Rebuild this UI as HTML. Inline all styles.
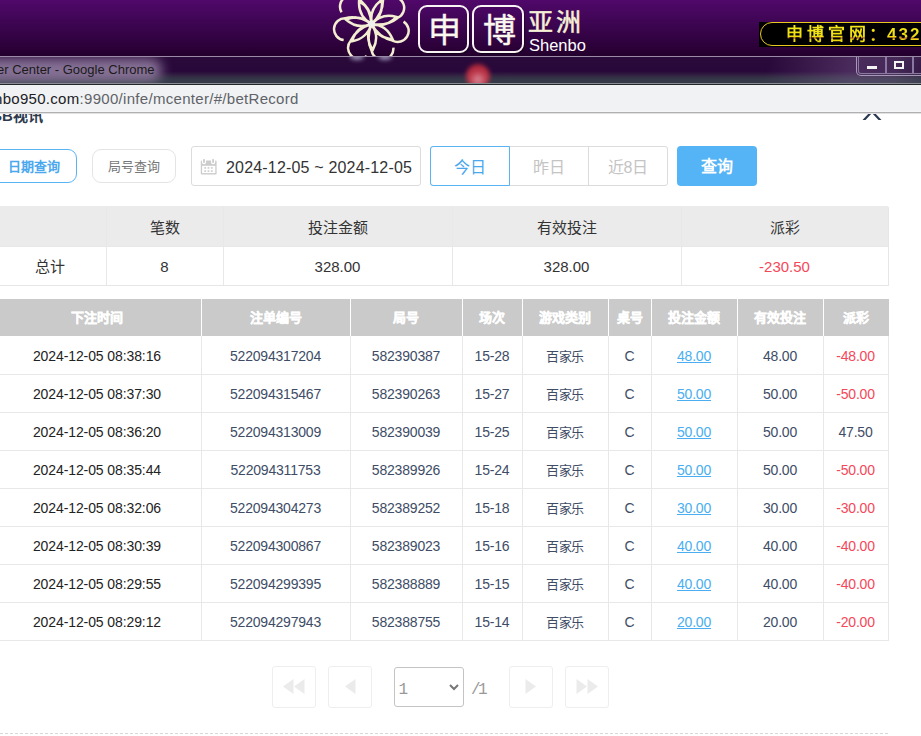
<!DOCTYPE html>
<html lang="zh-CN">
<head>
<meta charset="utf-8">
<style>
html,body{margin:0;padding:0;}
body{width:921px;height:736px;overflow:hidden;position:relative;background:#fff;font-family:"Liberation Sans",sans-serif;}
.a{position:absolute;}
/* banner */
#banner{position:absolute;left:0;top:0;width:921px;height:56px;background:linear-gradient(#50086a 0%,#3c0550 45%,#2a0036 88%,#22002c 100%);overflow:hidden;}
#bline{position:absolute;left:0;top:56px;width:921px;height:1px;background:#9a8aa8;}
#title{position:absolute;left:0;top:57px;width:921px;height:26px;background:linear-gradient(#2a0a3a 0%,#28083a 55%,#342a44 75%,#343848 85%,#363a48 100%);overflow:hidden;}
#addr{position:absolute;left:0;top:85px;width:921px;height:26px;background:#f1f2f4;overflow:hidden;}
/* tables */
.c{position:absolute;text-align:center;white-space:nowrap;overflow:hidden;}
.sumbg{position:absolute;background:#ebebeb;border-radius:3px 3px 0 0;}
.sumbox{position:absolute;border:1px solid #e6e6e6;border-top:none;border-left:none;border-radius:0 3px 0 0;}
.sh{font-size:15px;color:#333;padding-top:2px;box-sizing:border-box;}
.sb{font-size:15px;color:#333;padding-top:1px;box-sizing:border-box;}
.vl{position:absolute;width:1px;background:#e8e8e8;}
.vlw{position:absolute;width:1px;background:#fff;}
.hl{position:absolute;height:1px;background:#e8e8e8;}
.dhbg{position:absolute;background:#cacaca;}
.dh{font-size:13px;color:#fff;font-weight:bold;-webkit-text-stroke:0.35px #fff;}
.db{font-size:14px;color:#3e4c66;letter-spacing:-0.2px;padding-top:1px;box-sizing:border-box;}
.dt{color:#222;letter-spacing:-0.1px;}
.lnk{color:#4aaef0;}
.red{color:#f5475a;}
</style>
</head>
<body>
<div id="banner">
  <svg class="a" style="left:330px;top:0px" width="84" height="56" viewBox="0 0 84 56"><path d="M41.50 24.00 Q30.09 13.86 15.89 19.49 Q27.31 29.62 41.50 24.00 M13.66 40.07 A11 11 0 0 1 15.38 18.16 Q28.50 15.00 41.50 24.00 M41.50 24.00 Q42.31 8.76 29.07 1.17 Q28.26 16.41 41.50 24.00 M11.58 12.25 A11 11 0 0 1 29.78 -0.06 Q40.43 8.22 41.50 24.00 M41.50 24.00 Q53.92 15.13 51.60 0.04 Q39.18 8.91 41.50 24.00 M32.03 -6.72 A11 11 0 0 1 53.01 -0.17 Q53.17 13.33 41.50 24.00 M41.50 24.00 Q56.18 28.18 66.53 16.96 Q51.85 12.78 41.50 24.00 M59.61 -2.56 A11 11 0 0 1 67.57 17.93 Q57.12 26.47 41.50 24.00 M41.50 24.00 Q47.39 38.08 62.61 39.18 Q56.73 25.09 41.50 24.00 M73.56 21.60 A11 11 0 0 1 62.50 40.60 Q49.31 37.75 41.50 24.00 M41.50 24.00 Q34.16 37.38 42.80 49.97 Q50.14 36.59 41.50 24.00 M63.36 47.57 A11 11 0 0 1 41.62 50.77 Q35.62 38.68 41.50 24.00 M41.50 24.00 Q26.46 26.60 22.01 41.20 Q37.05 38.60 41.50 24.00 M36.70 55.79 A11 11 0 0 1 20.65 40.78 Q26.36 28.55 41.50 24.00" fill="none" stroke="#f3eed2" stroke-width="2.5"/><circle cx="41.5" cy="24" r="3.6" fill="#f0f0ee"/></svg>
  <div class="a" style="left:418px;top:5px;width:47px;height:44px;border:2px solid #f8f4f4;border-radius:9px;box-shadow:1px 1px 1px rgba(0,0,0,0.4);"></div>
  <div class="a" style="left:472px;top:5px;width:48px;height:44px;border:2px solid #f8f4f4;border-radius:9px;box-shadow:1px 1px 1px rgba(0,0,0,0.4);"></div>
  <div class="a" style="left:421px;top:6px;width:46px;text-align:center;font-size:33px;line-height:50px;color:#fbf8f0;-webkit-text-stroke:0.4px #fbf8f0;">申</div>
  <div class="a" style="left:475px;top:6px;width:48px;text-align:center;font-size:33px;line-height:50px;color:#fbf8f0;-webkit-text-stroke:0.4px #fbf8f0;">博</div>
  <div class="a" style="left:528px;top:7px;font-size:25px;line-height:30px;color:#f6f0d6;letter-spacing:3px;-webkit-text-stroke:0.5px #f6f0d6;">亚洲</div>
  <div class="a" style="left:529px;top:35px;font-size:16.5px;line-height:20px;color:#fff;">Shenbo</div>
  <div class="a" style="left:759px;top:22px;width:170px;height:25px;background:#000;"></div>
  <div class="a" style="left:760px;top:22px;width:180px;height:22px;border:1.5px solid #e8c820;border-radius:12px;"></div>
  <div class="a" style="left:786px;top:22px;font-size:17px;line-height:25px;font-weight:bold;color:transparent;background:linear-gradient(#f6ea20 0%,#f0de10 58%,#c88a20 61%,#c88a20 66%,#ecd810 69%,#e8d010 100%);-webkit-background-clip:text;background-clip:text;letter-spacing:4px;white-space:nowrap;">申博官<span style="letter-spacing:3px">网</span><span style="letter-spacing:1px">：</span><span style="letter-spacing:2px">432</span></div>
</div>
<div id="bline"></div>
<div id="title">
  <div class="a" style="left:-30px;top:1px;width:192px;height:24px;border-radius:12px;background:rgba(140,120,155,0.95);filter:blur(6px);"></div>
  <div class="a" style="left:-3px;top:-1px;font-size:13px;line-height:27px;color:#1a1a1a;white-space:nowrap;">er Center - Google Chrome</div>
  <div class="a" style="left:350px;top:-3px;width:14px;height:6px;border-radius:50%;background:rgba(200,200,230,0.7);filter:blur(2px);"></div>
  <div class="a" style="left:378px;top:-3px;width:14px;height:6px;border-radius:50%;background:rgba(200,200,230,0.7);filter:blur(2px);"></div>
  <div class="a" style="left:466px;top:7px;width:24px;height:24px;border-radius:50%;background:radial-gradient(circle at 50% 65%,#e898a8 0%,#d04050 40%,#b82838 70%);filter:blur(2px);opacity:0.9"></div>
  <div class="a" style="left:640px;top:0px;width:281px;height:26px;background:linear-gradient(105deg,rgba(0,0,0,0) 45%,rgba(125,95,145,0.4) 75%,rgba(120,100,140,0.35) 90%,rgba(100,90,120,0.2) 100%);"></div>
  <div class="a" style="left:856px;top:-1px;width:70px;height:19px;border:1px solid #a898b8;border-top:none;border-radius:0 0 0 5px;"></div>
  <div class="a" style="left:858px;top:-1px;width:26px;height:17px;border:1px solid #8a78a0;border-top:none;border-radius:0 0 0 3px;"></div>
  <div class="a" style="left:886px;top:-1px;width:25px;height:17px;border:1px solid #8a78a0;border-top:none;"></div>
  <div class="a" style="left:913px;top:-1px;width:25px;height:17px;border:1px solid #8a78a0;border-top:none;"></div>
  <div class="a" style="left:867px;top:9px;width:10px;height:3px;background:#f4f4f4;"></div>
  <div class="a" style="left:894px;top:4px;width:6px;height:4px;border:2px solid #f4f4f4;"></div>
</div>
<div class="a" style="left:0;top:83px;width:921px;height:1px;background:#8a8e92;"></div>
<div class="a" style="left:0;top:84px;width:921px;height:1px;background:#23272a;"></div>

<!-- modal header partial -->
<div class="a" style="left:-8px;top:105px;font-size:15px;line-height:22px;font-weight:bold;color:#2e3a4e;white-space:nowrap;">SB视讯</div>
<svg class="a" style="left:856px;top:100px;" width="32" height="24" viewBox="0 0 32 24"><path d="M6.5 20 L9.5 20 L25.5 3 L22.5 3Z M25.5 20 L22.5 20 L6.5 3 L9.5 3Z" fill="#2a3a50"/></svg>
<div id="addr">
  <div class="a" style="left:-6px;top:0px;font-size:15px;letter-spacing:0.3px;line-height:28px;white-space:nowrap;color:#202124;">nbo950.com<span style="color:#5f6368">:9900/infe/mcenter/#/betRecord</span></div>
</div>
<div class="a" style="left:0;top:111px;width:921px;height:1px;background:#f5f6f7;"></div>
<div class="a" style="left:0;top:112px;width:921px;height:1px;background:#b0b0b0;"></div>
<div class="a" style="left:0;top:113px;width:921px;height:1px;background:#e2e2e4;"></div>

<!-- filter row -->
<div class="a" style="left:-20px;top:149px;width:95px;height:32px;border:1px solid #5ab4f4;border-radius:9px;"></div>
<div class="a" style="left:8px;top:150px;font-size:13px;line-height:34px;font-weight:bold;color:#4aa8ee;">日期查询</div>
<div class="a" style="left:92px;top:149px;width:82px;height:32px;border:1px solid #e4e4e4;border-radius:9px;"></div>
<div class="a" style="left:107.5px;top:150px;font-size:13px;line-height:34px;color:#777;">局号查询</div>

<div class="a" style="left:191px;top:146px;width:228px;height:38px;border:1px solid #dcdcdc;border-radius:3px;"></div>
<svg class="a" style="left:200px;top:158px" width="18" height="18" viewBox="0 0 18 18">
  <rect x="0.8" y="2.4" width="15.8" height="14" rx="1.2" fill="#cccccc"/>
  <rect x="2.1" y="7.8" width="13.2" height="7.3" fill="#fff"/>
  <g fill="#d2d2d2"><rect x="4.3" y="9" width="1.8" height="1.8"/><rect x="7.6" y="9" width="1.8" height="1.8"/><rect x="10.9" y="9" width="1.8" height="1.8"/>
  <rect x="4.3" y="12.2" width="1.8" height="1.8"/><rect x="7.6" y="12.2" width="1.8" height="1.8"/><rect x="10.9" y="12.2" width="1.8" height="1.8"/></g>
  <rect x="2.5" y="0.3" width="3" height="5.4" rx="1.4" fill="#cccccc" stroke="#fff" stroke-width="1.2"/>
  <rect x="11.6" y="0.3" width="3" height="5.4" rx="1.4" fill="#cccccc" stroke="#fff" stroke-width="1.2"/>
</svg>
<div class="a" style="left:226px;top:147.5px;font-size:16px;letter-spacing:0.18px;line-height:40px;color:#333;white-space:nowrap;">2024-12-05 ~ 2024-12-05</div>

<div class="a" style="left:430px;top:146px;width:236px;height:38px;border:1px solid #dcdcdc;border-radius:3px;"></div>
<div class="a" style="left:588px;top:147px;width:1px;height:38px;background:#dcdcdc;"></div>
<div class="a" style="left:430px;top:146px;width:78px;height:38px;border:1px solid #5ab4f4;border-radius:3px 0 0 3px;"></div>
<div class="a" style="left:430px;top:148px;width:80px;text-align:center;font-size:16px;line-height:40px;color:#4aa8ee;">今日</div>
<div class="a" style="left:509px;top:148px;width:80px;text-align:center;font-size:16px;line-height:40px;color:#c4c4c4;">昨日</div>
<div class="a" style="left:588px;top:148px;width:80px;text-align:center;font-size:16px;line-height:40px;color:#c4c4c4;">近8日</div>
<div class="a" style="left:677px;top:146px;width:80px;height:40px;background:#55b4f6;border-radius:4px;text-align:center;font-size:16px;line-height:41px;color:#fff;font-weight:bold;">查询</div>

<div class="sumbg" style="left:-7px;top:206px;width:896px;height:40px"></div>
<div class="sumbox" style="left:-7px;top:206px;width:895px;height:79px"></div>
<div class="c sh" style="left:-7px;top:206px;width:113px;height:40px;line-height:40px"></div>
<div class="c sb" style="left:-7px;top:246px;width:113px;height:39px;line-height:39px">总计</div>
<div class="c sh" style="left:106px;top:206px;width:117px;height:40px;line-height:40px">笔数</div>
<div class="c sb" style="left:106px;top:246px;width:117px;height:39px;line-height:39px">8</div>
<div class="c sh" style="left:223px;top:206px;width:229px;height:40px;line-height:40px">投注金额</div>
<div class="c sb" style="left:223px;top:246px;width:229px;height:39px;line-height:39px">328.00</div>
<div class="c sh" style="left:452px;top:206px;width:229px;height:40px;line-height:40px">有效投注</div>
<div class="c sb" style="left:452px;top:246px;width:229px;height:39px;line-height:39px">328.00</div>
<div class="c sh" style="left:681px;top:206px;width:207px;height:40px;line-height:40px">派彩</div>
<div class="c sb" style="left:681px;top:246px;width:207px;height:39px;line-height:39px"><span class="red">-230.50</span></div>
<div class="vl" style="left:106px;top:206px;height:79px"></div>
<div class="vl" style="left:223px;top:206px;height:79px"></div>
<div class="vl" style="left:452px;top:206px;height:79px"></div>
<div class="vl" style="left:681px;top:206px;height:79px"></div>
<div class="hl" style="left:-7px;top:246px;width:896px"></div>
<div class="dhbg" style="left:-7px;top:299px;width:896px;height:37px"></div>
<div class="c dh" style="left:-7px;top:299px;width:208px;height:37px;line-height:37px">下注时间</div>
<div class="c dh" style="left:201px;top:299px;width:149px;height:37px;line-height:37px">注单编号</div>
<div class="c dh" style="left:350px;top:299px;width:112px;height:37px;line-height:37px">局号</div>
<div class="c dh" style="left:462px;top:299px;width:60px;height:37px;line-height:37px">场次</div>
<div class="c dh" style="left:522px;top:299px;width:86px;height:37px;line-height:37px">游戏类别</div>
<div class="c dh" style="left:608px;top:299px;width:43px;height:37px;line-height:37px">桌号</div>
<div class="c dh" style="left:651px;top:299px;width:86px;height:37px;line-height:37px">投注金额</div>
<div class="c dh" style="left:737px;top:299px;width:86px;height:37px;line-height:37px">有效投注</div>
<div class="c dh" style="left:823px;top:299px;width:65px;height:37px;line-height:37px">派彩</div>
<div class="vlw" style="left:201px;top:299px;height:37px"></div>
<div class="vl" style="left:201px;top:336px;height:305px"></div>
<div class="vlw" style="left:350px;top:299px;height:37px"></div>
<div class="vl" style="left:350px;top:336px;height:305px"></div>
<div class="vlw" style="left:462px;top:299px;height:37px"></div>
<div class="vl" style="left:462px;top:336px;height:305px"></div>
<div class="vlw" style="left:522px;top:299px;height:37px"></div>
<div class="vl" style="left:522px;top:336px;height:305px"></div>
<div class="vlw" style="left:608px;top:299px;height:37px"></div>
<div class="vl" style="left:608px;top:336px;height:305px"></div>
<div class="vlw" style="left:651px;top:299px;height:37px"></div>
<div class="vl" style="left:651px;top:336px;height:305px"></div>
<div class="vlw" style="left:737px;top:299px;height:37px"></div>
<div class="vl" style="left:737px;top:336px;height:305px"></div>
<div class="vlw" style="left:823px;top:299px;height:37px"></div>
<div class="vl" style="left:823px;top:336px;height:305px"></div>
<div class="vl" style="left:888px;top:336px;height:305px"></div>
<div class="c db dt" style="left:-7px;top:336px;width:208px;height:38px;line-height:38px">2024-12-05 08:38:16</div>
<div class="c db dn" style="left:201px;top:336px;width:149px;height:38px;line-height:38px">522094317204</div>
<div class="c db dn" style="left:350px;top:336px;width:112px;height:38px;line-height:38px">582390387</div>
<div class="c db dn" style="left:462px;top:336px;width:60px;height:38px;line-height:38px">15-28</div>
<div class="c db dn" style="left:522px;top:336px;width:86px;height:38px;line-height:38px"><span style="font-size:13px">百家乐</span></div>
<div class="c db dn" style="left:608px;top:336px;width:43px;height:38px;line-height:38px">C</div>
<div class="c db lnk" style="left:651px;top:336px;width:86px;height:38px;line-height:38px"><u>48.00</u></div>
<div class="c db dn" style="left:737px;top:336px;width:86px;height:38px;line-height:38px">48.00</div>
<div class="c db red" style="left:823px;top:336px;width:65px;height:38px;line-height:38px">-48.00</div>
<div class="hl" style="left:-7px;top:374px;width:896px"></div>
<div class="c db dt" style="left:-7px;top:374px;width:208px;height:38px;line-height:38px">2024-12-05 08:37:30</div>
<div class="c db dn" style="left:201px;top:374px;width:149px;height:38px;line-height:38px">522094315467</div>
<div class="c db dn" style="left:350px;top:374px;width:112px;height:38px;line-height:38px">582390263</div>
<div class="c db dn" style="left:462px;top:374px;width:60px;height:38px;line-height:38px">15-27</div>
<div class="c db dn" style="left:522px;top:374px;width:86px;height:38px;line-height:38px"><span style="font-size:13px">百家乐</span></div>
<div class="c db dn" style="left:608px;top:374px;width:43px;height:38px;line-height:38px">C</div>
<div class="c db lnk" style="left:651px;top:374px;width:86px;height:38px;line-height:38px"><u>50.00</u></div>
<div class="c db dn" style="left:737px;top:374px;width:86px;height:38px;line-height:38px">50.00</div>
<div class="c db red" style="left:823px;top:374px;width:65px;height:38px;line-height:38px">-50.00</div>
<div class="hl" style="left:-7px;top:412px;width:896px"></div>
<div class="c db dt" style="left:-7px;top:412px;width:208px;height:38px;line-height:38px">2024-12-05 08:36:20</div>
<div class="c db dn" style="left:201px;top:412px;width:149px;height:38px;line-height:38px">522094313009</div>
<div class="c db dn" style="left:350px;top:412px;width:112px;height:38px;line-height:38px">582390039</div>
<div class="c db dn" style="left:462px;top:412px;width:60px;height:38px;line-height:38px">15-25</div>
<div class="c db dn" style="left:522px;top:412px;width:86px;height:38px;line-height:38px"><span style="font-size:13px">百家乐</span></div>
<div class="c db dn" style="left:608px;top:412px;width:43px;height:38px;line-height:38px">C</div>
<div class="c db lnk" style="left:651px;top:412px;width:86px;height:38px;line-height:38px"><u>50.00</u></div>
<div class="c db dn" style="left:737px;top:412px;width:86px;height:38px;line-height:38px">50.00</div>
<div class="c db dn" style="left:823px;top:412px;width:65px;height:38px;line-height:38px">47.50</div>
<div class="hl" style="left:-7px;top:450px;width:896px"></div>
<div class="c db dt" style="left:-7px;top:450px;width:208px;height:38px;line-height:38px">2024-12-05 08:35:44</div>
<div class="c db dn" style="left:201px;top:450px;width:149px;height:38px;line-height:38px">522094311753</div>
<div class="c db dn" style="left:350px;top:450px;width:112px;height:38px;line-height:38px">582389926</div>
<div class="c db dn" style="left:462px;top:450px;width:60px;height:38px;line-height:38px">15-24</div>
<div class="c db dn" style="left:522px;top:450px;width:86px;height:38px;line-height:38px"><span style="font-size:13px">百家乐</span></div>
<div class="c db dn" style="left:608px;top:450px;width:43px;height:38px;line-height:38px">C</div>
<div class="c db lnk" style="left:651px;top:450px;width:86px;height:38px;line-height:38px"><u>50.00</u></div>
<div class="c db dn" style="left:737px;top:450px;width:86px;height:38px;line-height:38px">50.00</div>
<div class="c db red" style="left:823px;top:450px;width:65px;height:38px;line-height:38px">-50.00</div>
<div class="hl" style="left:-7px;top:488px;width:896px"></div>
<div class="c db dt" style="left:-7px;top:488px;width:208px;height:38px;line-height:38px">2024-12-05 08:32:06</div>
<div class="c db dn" style="left:201px;top:488px;width:149px;height:38px;line-height:38px">522094304273</div>
<div class="c db dn" style="left:350px;top:488px;width:112px;height:38px;line-height:38px">582389252</div>
<div class="c db dn" style="left:462px;top:488px;width:60px;height:38px;line-height:38px">15-18</div>
<div class="c db dn" style="left:522px;top:488px;width:86px;height:38px;line-height:38px"><span style="font-size:13px">百家乐</span></div>
<div class="c db dn" style="left:608px;top:488px;width:43px;height:38px;line-height:38px">C</div>
<div class="c db lnk" style="left:651px;top:488px;width:86px;height:38px;line-height:38px"><u>30.00</u></div>
<div class="c db dn" style="left:737px;top:488px;width:86px;height:38px;line-height:38px">30.00</div>
<div class="c db red" style="left:823px;top:488px;width:65px;height:38px;line-height:38px">-30.00</div>
<div class="hl" style="left:-7px;top:526px;width:896px"></div>
<div class="c db dt" style="left:-7px;top:526px;width:208px;height:38px;line-height:38px">2024-12-05 08:30:39</div>
<div class="c db dn" style="left:201px;top:526px;width:149px;height:38px;line-height:38px">522094300867</div>
<div class="c db dn" style="left:350px;top:526px;width:112px;height:38px;line-height:38px">582389023</div>
<div class="c db dn" style="left:462px;top:526px;width:60px;height:38px;line-height:38px">15-16</div>
<div class="c db dn" style="left:522px;top:526px;width:86px;height:38px;line-height:38px"><span style="font-size:13px">百家乐</span></div>
<div class="c db dn" style="left:608px;top:526px;width:43px;height:38px;line-height:38px">C</div>
<div class="c db lnk" style="left:651px;top:526px;width:86px;height:38px;line-height:38px"><u>40.00</u></div>
<div class="c db dn" style="left:737px;top:526px;width:86px;height:38px;line-height:38px">40.00</div>
<div class="c db red" style="left:823px;top:526px;width:65px;height:38px;line-height:38px">-40.00</div>
<div class="hl" style="left:-7px;top:564px;width:896px"></div>
<div class="c db dt" style="left:-7px;top:564px;width:208px;height:38px;line-height:38px">2024-12-05 08:29:55</div>
<div class="c db dn" style="left:201px;top:564px;width:149px;height:38px;line-height:38px">522094299395</div>
<div class="c db dn" style="left:350px;top:564px;width:112px;height:38px;line-height:38px">582388889</div>
<div class="c db dn" style="left:462px;top:564px;width:60px;height:38px;line-height:38px">15-15</div>
<div class="c db dn" style="left:522px;top:564px;width:86px;height:38px;line-height:38px"><span style="font-size:13px">百家乐</span></div>
<div class="c db dn" style="left:608px;top:564px;width:43px;height:38px;line-height:38px">C</div>
<div class="c db lnk" style="left:651px;top:564px;width:86px;height:38px;line-height:38px"><u>40.00</u></div>
<div class="c db dn" style="left:737px;top:564px;width:86px;height:38px;line-height:38px">40.00</div>
<div class="c db red" style="left:823px;top:564px;width:65px;height:38px;line-height:38px">-40.00</div>
<div class="hl" style="left:-7px;top:602px;width:896px"></div>
<div class="c db dt" style="left:-7px;top:602px;width:208px;height:38px;line-height:38px">2024-12-05 08:29:12</div>
<div class="c db dn" style="left:201px;top:602px;width:149px;height:38px;line-height:38px">522094297943</div>
<div class="c db dn" style="left:350px;top:602px;width:112px;height:38px;line-height:38px">582388755</div>
<div class="c db dn" style="left:462px;top:602px;width:60px;height:38px;line-height:38px">15-14</div>
<div class="c db dn" style="left:522px;top:602px;width:86px;height:38px;line-height:38px"><span style="font-size:13px">百家乐</span></div>
<div class="c db dn" style="left:608px;top:602px;width:43px;height:38px;line-height:38px">C</div>
<div class="c db lnk" style="left:651px;top:602px;width:86px;height:38px;line-height:38px"><u>20.00</u></div>
<div class="c db dn" style="left:737px;top:602px;width:86px;height:38px;line-height:38px">20.00</div>
<div class="c db red" style="left:823px;top:602px;width:65px;height:38px;line-height:38px">-20.00</div>
<div class="hl" style="left:-7px;top:640px;width:896px"></div>

<!-- pagination -->
<div class="a" style="left:272px;top:666px;width:42px;height:40px;border:1px solid #eeeeee;border-radius:3px;"></div>
<div class="a" style="left:328px;top:666px;width:42px;height:40px;border:1px solid #eeeeee;border-radius:3px;"></div>
<div class="a" style="left:509px;top:666px;width:42px;height:40px;border:1px solid #eeeeee;border-radius:3px;"></div>
<div class="a" style="left:565px;top:666px;width:42px;height:40px;border:1px solid #eeeeee;border-radius:3px;"></div>
<svg class="a" style="left:272px;top:665px" width="44" height="42"><path d="M11 21.5 L21.5 14 L21.5 29Z M22 21.5 L32.5 14 L32.5 29Z" fill="#ebebeb"/></svg>
<svg class="a" style="left:328px;top:665px" width="44" height="42"><path d="M17 21.5 L27.5 14 L27.5 29Z" fill="#ebebeb"/></svg>
<svg class="a" style="left:509px;top:665px" width="44" height="42"><path d="M27 21.5 L16.5 14 L16.5 29Z" fill="#ebebeb"/></svg>
<svg class="a" style="left:565px;top:665px" width="44" height="42"><path d="M22 21.5 L11.5 14 L11.5 29Z M33 21.5 L22.5 14 L22.5 29Z" fill="#ebebeb"/></svg>
<div class="a" style="left:394px;top:667px;width:68px;height:38px;border:1px solid #c4c4c4;border-radius:3px;"></div>
<div class="a" style="left:398.5px;top:669.5px;font-family:'Liberation Mono',monospace;font-size:16px;line-height:40px;color:#999;">1</div>
<svg class="a" style="left:448px;top:682px" width="12" height="10"><path d="M2 3 L6 7 L10 3" fill="none" stroke="#777" stroke-width="2"/></svg>
<div class="a" style="left:471px;top:669.5px;font-family:'Liberation Mono',monospace;font-size:16px;line-height:40px;color:#999;letter-spacing:-2.5px;">/1</div>
<div class="a" style="left:0;top:733px;width:888px;height:0;border-top:1px dashed #d8d8d8;"></div>
</body>
</html>
